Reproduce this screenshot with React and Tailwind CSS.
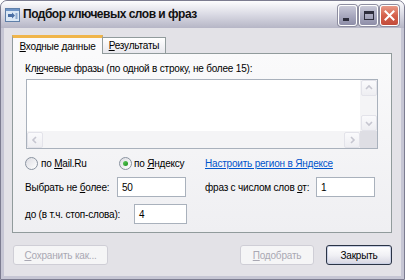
import React from "react";

const U = ({ children }) => <span className="underline">{children}</span>;

const AppIcon = () => (
  <svg width="15" height="14" viewBox="0 0 15 14" className="shrink-0">
    <rect x="0.5" y="0.5" width="14" height="13" fill="#dbe8f6" stroke="#5f7fa8" />
    <rect x="1" y="1" width="13" height="2" fill="#6f94c6" />
    <path d="M3 6 L7 6 L7 4.5 L10 7.5 L7 10.5 L7 9 L3 9 Z" fill="#4a6fa5" />
    <rect x="10.5" y="5" width="2" height="6" fill="#8eaad0" />
  </svg>
);

const CaptionButton = ({ kind }) => {
  const red = kind === "close";
  return (
    <div
      className={`w-[19px] h-[21px] rounded-[3px] border border-white flex items-center justify-center shadow-[0_0_0_1px_#8e8ea0] ${
        red
          ? "bg-gradient-to-b from-[#e89a88] via-[#d5614c] to-[#c24a3a]"
          : "bg-gradient-to-b from-[#c9c9d8] via-[#a9a9bf] to-[#8e8ea8]"
      }`}
    >
      {kind === "min" && <div className="w-[6px] h-[3px] bg-[#2d2d3c] mt-[8px] -ml-[3px]" />}
      {kind === "max" && (
        <div className="w-[10px] h-[9px] border border-[#2d2d3c] border-t-[3px]" />
      )}
      {red && (
        <svg width="11" height="11" viewBox="0 0 11 11">
          <path d="M1.5 1.5 L9.5 9.5 M9.5 1.5 L1.5 9.5" stroke="#fff" strokeWidth="2" strokeLinecap="square" />
        </svg>
      )}
    </div>
  );
};

const Radio = ({ checked }) => (
  <div className="w-[13px] h-[13px] rounded-full border border-[#8a93a0] bg-gradient-to-br from-[#dcdce2] to-[#ffffff] flex items-center justify-center shrink-0">
    {checked && (
      <div className="w-[5px] h-[5px] rounded-full bg-gradient-to-br from-[#5ccc5c] to-[#1a8f1a]" />
    )}
  </div>
);

const Field = ({ value, w }) => (
  <div className={`${w} h-[20px] border border-[#a9b1bc] bg-white flex items-center pl-[4px] shrink-0`}>
    {value}
  </div>
);

const Chevron = ({ dir }) => {
  const d = {
    up: "M2 6 L5 3 L8 6",
    down: "M2 4 L5 7 L8 4",
    left: "M6 2 L3 5 L6 8",
    right: "M4 2 L7 5 L4 8",
  }[dir];
  return (
    <div className="w-[16px] h-[16px] rounded-[2px] border border-[#e3e3ea] bg-gradient-to-b from-[#fafafc] to-[#eeeef2] flex items-center justify-center">
      <svg width="10" height="10" viewBox="0 0 10 10">
        <path d={d} fill="none" stroke="#c6c6d0" strokeWidth="1.6" />
      </svg>
    </div>
  );
};

const Button = ({ children, w, disabled, primary }) => (
  <div
    className={`${w} h-[20px] rounded-[3px] flex items-center justify-center ${
      disabled
        ? "border border-[#cfced6] bg-[#f5f5f6] text-[#a9a8b3]"
        : "border border-[#2a3446] bg-gradient-to-b from-[#ffffff] via-[#f1f1f5] to-[#d6d6e2] text-black"
    } ${primary ? "shadow-[inset_0_0_0_1px_#c9d0e4]" : ""}`}
  >
    {children}
  </div>
);

export default function App() {
  return (
    <div className="w-[405px] h-[280px] bg-white font-['Liberation_Sans',Arial,sans-serif] text-[10px] tracking-[-0.2px] leading-[13px] text-black whitespace-nowrap">
      <div className="w-full h-full flex flex-col rounded-t-[7px] overflow-hidden border border-[#7c7c90] bg-[#c6c6d4]">
        {/* title bar */}
        <div className="h-[27px] shrink-0 flex items-center pl-[4px] pr-[5px] bg-gradient-to-b from-[#fdfdfe] via-[#dadae4] to-[#b6b6c6]">
          <AppIcon />
          <span className="ml-[3px] font-bold text-[12px] tracking-[-0.5px] text-[#111]">Подбор ключевых слов и фраз</span>
          <div className="ml-auto flex gap-[2px] mt-[1px]">
            <CaptionButton kind="min" />
            <CaptionButton kind="max" />
            <CaptionButton kind="close" />
          </div>
        </div>

        {/* client area */}
        <div className="flex-1 mx-[3px] mb-[3px] bg-[#e3e2e7] flex flex-col pl-[8px] pr-[9px] pt-[7px]">
          {/* tabs */}
          <div className="flex items-end h-[18px]">
            <div className="relative h-[19px] w-[91px] -mb-[1px] z-10 bg-[#fafafb] border-x border-[#919b9c] border-t-[3px] border-t-[#f0b54a] flex items-center justify-center">
              <span>
                <U>В</U>ходные данные
              </span>
            </div>
            <div className="h-[16px] w-[63px] bg-gradient-to-b from-[#ffffff] to-[#e8e8ed] border-t border-r border-[#919b9c] flex items-center justify-center">
              <span>
                <U>Р</U>езультаты
              </span>
            </div>
          </div>

          {/* panel */}
          <div className="h-[180px] border border-[#919b9c] bg-gradient-to-b from-[#fafafb] to-[#efeff2] px-[12px] pt-[8px] flex flex-col">
            <div>
              Кл<U>ю</U>чевые фразы (по одной в строку, не более 15):
            </div>

            <div className="mt-[4px] ml-[1px] w-[352px] h-[70px] border border-[#a9b1bc] bg-white flex">
              <div className="flex-1 flex flex-col">
                <div className="flex-1" />
                <div className="h-[17px] bg-[#f4f4f6] flex justify-between items-center">
                  <Chevron dir="left" />
                  <Chevron dir="right" />
                </div>
              </div>
              <div className="w-[17px] flex flex-col">
                <div className="flex-1 bg-[#f4f4f6] flex flex-col justify-between items-center">
                  <Chevron dir="up" />
                  <Chevron dir="down" />
                </div>
                <div className="h-[17px] bg-[#dedee4]" />
              </div>
            </div>

            {/* radios */}
            <div className="mt-[8px] flex items-center h-[13px]">
              <div className="w-[94px] flex items-center">
                <Radio />
                <span className="ml-[3px]">
                  по <U>M</U>ail.Ru
                </span>
              </div>
              <div className="w-[86px] flex items-center">
                <Radio checked />
                <span className="ml-[2px]">
                  по <U>Я</U>ндексу
                </span>
              </div>
              <span className="text-[#0055cc] underline">Настроить регион в Яндексе</span>
            </div>

            {/* row 2 */}
            <div className="mt-[7px] flex items-center">
              <div className="w-[92px]">
                Выбрать не <U>б</U>олее:
              </div>
              <Field value="50" w="w-[69px]" />
              <div className="w-[19px]" />
              <div className="w-[111px]">
                фраз с числом слов <U>о</U>т:
              </div>
              <Field value="1" w="w-[59px]" />
            </div>

            {/* row 3 */}
            <div className="mt-[7px] flex items-center">
              <div className="w-[109px]">до (в т.ч. стоп-слова):</div>
              <Field value="4" w="w-[53px]" />
            </div>
          </div>

          {/* buttons */}
          <div className="mt-[12px] flex items-center">
            <div className="ml-[1px]">
              <Button w="w-[95px]" disabled>
                <span>
                  <U>С</U>охранить как...
                </span>
              </Button>
            </div>
            <div className="ml-auto">
              <Button w="w-[74px]" disabled>
                <span>
                  <U>П</U>одобрать
                </span>
              </Button>
            </div>
            <div className="ml-[12px]">
              <Button w="w-[66px]" primary>
                Закрыть
              </Button>
            </div>
          </div>
        </div>
      </div>
    </div>
  );
}
